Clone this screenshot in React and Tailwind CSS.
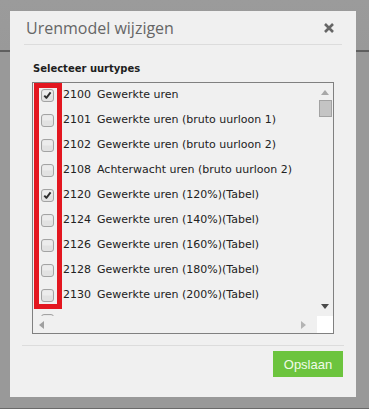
import React from "react";

const rows = [
  ["2100", "Gewerkte uren", true],
  ["2101", "Gewerkte uren (bruto uurloon 1)", false],
  ["2102", "Gewerkte uren (bruto uurloon 2)", false],
  ["2108", "Achterwacht uren (bruto uurloon 2)", false],
  ["2120", "Gewerkte uren (120%)(Tabel)", true],
  ["2124", "Gewerkte uren (140%)(Tabel)", false],
  ["2126", "Gewerkte uren (160%)(Tabel)", false],
  ["2128", "Gewerkte uren (180%)(Tabel)", false],
  ["2130", "Gewerkte uren (200%)(Tabel)", false],
];

function Checkbox({ checked }) {
  return (
    <svg width="13" height="13" viewBox="0 0 13 13" className="shrink-0">
      <rect x="0.5" y="0.5" width="12" height="12" rx="2.5" fill="#e2e2e2" stroke="#a3a3a3" />
      <rect x="1.5" y="1.5" width="10" height="5" rx="1.5" fill="#ececec" />
      {checked && (
        <path d="M3.3 6.6 L5.4 8.9 L9.6 3.4" fill="none" stroke="#2e2e2e" strokeWidth="1.9" strokeLinejoin="round" />
      )}
    </svg>
  );
}

export default function App() {
  return (
    <div className="w-[369px] h-[409px] pt-[11px] pl-[10px] bg-[#999] bg-[linear-gradient(to_bottom,#9b9b9b_0px,#999_50px,#5f5f5f_50px,#5f5f5f_52px,#999_52px,#999_408px,#6a6a6a_408px)] font-['DejaVu_Sans',sans-serif]">
      <div className="w-[346px] h-[386px] bg-[#f0f0f0] flex flex-col">
        {/* header */}
        <div className="mx-[14px] h-[34px] border-b border-[#dcdcdc] flex items-center justify-between pl-[2px] pr-[8px]">
          <span className="font-['Open_Sans',sans-serif] text-[16px] leading-none text-[#666] pt-[1px]">
            Urenmodel wijzigen
          </span>
          <svg width="10" height="10" viewBox="0 0 10 10" className="mt-[1px]">
            <path d="M1 1 L9 9 M9 1 L1 9" stroke="#666" strokeWidth="2.6" strokeLinecap="butt" />
          </svg>
        </div>

        {/* body */}
        <div className="pl-[22px] pt-[17px]">
          <div className="pl-[1px] h-[14px] leading-[14px] text-[10px] font-bold text-[#1e1e1e]">
            Selecteer uurtypes
          </div>
          <div className="mt-[6px] w-[302px] h-[252px] border border-[#808080] flex flex-col relative">
            <div className="flex h-[233px]">
              <div className="flex-1 overflow-hidden">
                {rows.map(([code, name, checked]) => (
                  <div key={code} className="h-[25px] flex items-center pl-[8px] text-[11px] text-[#222] whitespace-nowrap">
                    <Checkbox checked={checked} />
                    <span className="ml-[9px]">{code}</span>
                    <span className="ml-[6px]">{name}</span>
                  </div>
                ))}
                <div className="h-[25px] flex items-center pl-[8px]">
                  <Checkbox checked={false} />
                </div>
              </div>
              {/* vertical scrollbar */}
              <div className="w-[16px] flex flex-col items-center">
                <svg width="8" height="5" viewBox="0 0 8 5" className="mt-[7px]">
                  <path d="M0 5 L4 0 L8 5 Z" fill="#a8a8a8" />
                </svg>
                <div className="mt-[5px] w-[13px] h-[17px] bg-[#c4c4c4] border border-[#a2a2a2]" />
                <div className="flex-1" />
                <svg width="8" height="5" viewBox="0 0 8 5" className="mb-[7px]">
                  <path d="M0 0 L8 0 L4 5 Z" fill="#4a4a4a" />
                </svg>
              </div>
            </div>
            {/* horizontal scrollbar */}
            <div className="flex h-[17px]">
              <div className="flex-1 flex items-center justify-between pl-[6px] pr-[11px]">
                <svg width="5" height="8" viewBox="0 0 5 8">
                  <path d="M5 0 L0 4 L5 8 Z" fill="#a0a0a0" />
                </svg>
                <svg width="5" height="8" viewBox="0 0 5 8">
                  <path d="M0 0 L5 4 L0 8 Z" fill="#b4b4b4" />
                </svg>
              </div>
              <div className="w-[16px] h-[17px] bg-white" />
            </div>
            {/* red highlight */}
            <div className="absolute left-[1px] top-[0px] w-[28px] h-[226px] border-[5px] border-[#e3161f] pointer-events-none" />
          </div>
        </div>

        {/* footer */}
        <div className="mt-[11px] mx-[12px] border-t border-[#dcdcdc]" />
        <div className="flex justify-end pr-[13px] pt-[5px]">
          <button className="w-[70px] h-[26px] bg-[#6cc43e] text-[#f1fbe9] font-['Liberation_Sans',Arial,sans-serif] text-[13px] leading-none">
            Opslaan
          </button>
        </div>
      </div>
    </div>
  );
}
